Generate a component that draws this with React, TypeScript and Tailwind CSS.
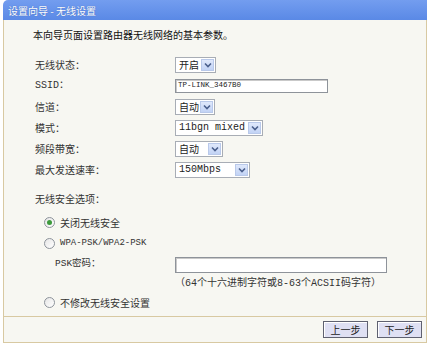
import { ReactNode } from "react";

const CJK = "font-['Noto_Sans_CJK_SC',sans-serif]";
const MONO = "font-['Liberation_Mono','Noto_Sans_CJK_SC',monospace]";

function Arrow() {
  return (
    <span className="flex h-full w-[13px] items-center justify-center border border-[#b9c9ea] bg-gradient-to-b from-[#dfe8fb] to-[#c2d3f5]">
      <svg width="8" height="6" viewBox="0 0 8 6">
        <path d="M1 1.5 L4 4.5 L7 1.5" fill="none" stroke="#4a5f8c" strokeWidth="1.6" />
      </svg>
    </span>
  );
}

function Select({ value, width, mono }: { value: string; width: string; mono?: boolean }) {
  return (
    <div className={`flex h-[16px] items-center justify-between border border-[#a8adb5] bg-white pl-[3px] pr-[1px] ${width}`}>
      <span className={`whitespace-nowrap text-[10px] text-[#222] ${mono ? MONO : CJK}`}>{value}</span>
      <div className="h-[12px]">
        <Arrow />
      </div>
    </div>
  );
}

function Row({ label, children, mono }: { label: string; children: ReactNode; mono?: boolean }) {
  return (
    <div className="flex h-[21px] items-center">
      <span className={`w-[140px] shrink-0 text-[10px] text-[#333] ${mono ? MONO : CJK}`}>{label}</span>
      {children}
    </div>
  );
}

function Radio({ checked }: { checked?: boolean }) {
  return (
    <span className="flex h-[11px] w-[11px] items-center justify-center rounded-full border border-[#8d939b] bg-gradient-to-br from-[#e6e6e6] to-white">
      {checked && <span className="h-[5px] w-[5px] rounded-full bg-[#3c9a3c]" />}
    </span>
  );
}

export default function App() {
  return (
    <div className={`h-[345px] w-[430px] overflow-hidden bg-white ${CJK}`}>
      {/* title */}
      <div className="mx-[3px] flex h-[20px] items-center rounded-tl-[5px] bg-gradient-to-b from-[#739def] to-[#5a89e6] pl-[5px]">
        <span className="text-[10px] text-white [text-shadow:0_0_1px_#3a5fae]">设置向导 - 无线设置</span>
      </div>

      {/* panel */}
      <div className="mx-[3px] border-x border-b border-[#d8c9a2] bg-[#f7f7f2]">
        <div className="h-[296px] pl-[29px]">
          <p className="pt-[9px] text-[10px] leading-[12px] text-[#111]">本向导页面设置路由器无线网络的基本参数。</p>

          <div className="mt-[13px] pl-[2px]">
            <Row label="无线状态：">
              <Select value="开启" width="w-[41px]" />
            </Row>
            <Row label="SSID：" mono>
              <div className="flex h-[14px] w-[153px] items-center border border-[#8e939a] bg-white pl-[2px] shadow-[inset_1px_1px_0_#c9c9c9]">
                <span className={`${MONO} text-[7.5px] text-[#222]`}>TP-LINK_3467B0</span>
              </div>
            </Row>
            <Row label="信道：">
              <Select value="自动" width="w-[40px]" />
            </Row>
            <Row label="模式：">
              <Select value="11bgn mixed" width="w-[88px]" mono />
            </Row>
            <Row label="频段带宽：">
              <Select value="自动" width="w-[48px]" />
            </Row>
            <Row label="最大发送速率：">
              <Select value="150Mbps" width="w-[75px]" mono />
            </Row>
          </div>

          <p className="mt-[13px] pl-[2px] text-[10px] leading-[12px] text-[#333]">无线安全选项：</p>

          <div className="mt-[7px]">
            <div className="flex h-[21px] items-center gap-[5px] pl-[11px]">
              <Radio checked />
              <span className="text-[10px] text-[#333]">关闭无线安全</span>
            </div>
            <div className="flex h-[21px] items-center gap-[5px] pl-[11px]">
              <Radio />
              <span className={`${MONO} text-[9px] text-[#333]`}>WPA-PSK/WPA2-PSK</span>
            </div>
            <div className="flex h-[21px] items-center">
              <span className={`w-[142px] shrink-0 pl-[22px] text-[9.5px] text-[#333] ${MONO}`}>PSK密码：</span>
              <div className="h-[16px] w-[212px] border border-[#8e939a] bg-white shadow-[inset_1px_1px_0_#c9c9c9]" />
            </div>
            <div className="flex h-[16px] items-center pl-[142px]">
              <span className={`${MONO} text-[10px] text-[#333]`}>（64个十六进制字符或8-63个ACSII码字符）</span>
            </div>
            <div className="mt-[1px] flex h-[21px] items-center gap-[5px] pl-[11px]">
              <Radio />
              <span className="text-[10px] text-[#333]">不修改无线安全设置</span>
            </div>
          </div>
        </div>

        {/* footer */}
        <div className="flex h-[26px] items-center justify-end gap-[9px] border-t border-[#d8c9a2] pr-[4px]">
          <button className="h-[17px] w-[45px] border border-[#5f6170] bg-[#dfe0f3] text-[10px] leading-none text-[#222] shadow-[inset_1px_1px_0_#fff]">
            上一步
          </button>
          <button className="h-[17px] w-[45px] border border-[#5f6170] bg-[#dfe0f3] text-[10px] leading-none text-[#222] shadow-[inset_1px_1px_0_#fff]">
            下一步
          </button>
        </div>
      </div>
    </div>
  );
}
